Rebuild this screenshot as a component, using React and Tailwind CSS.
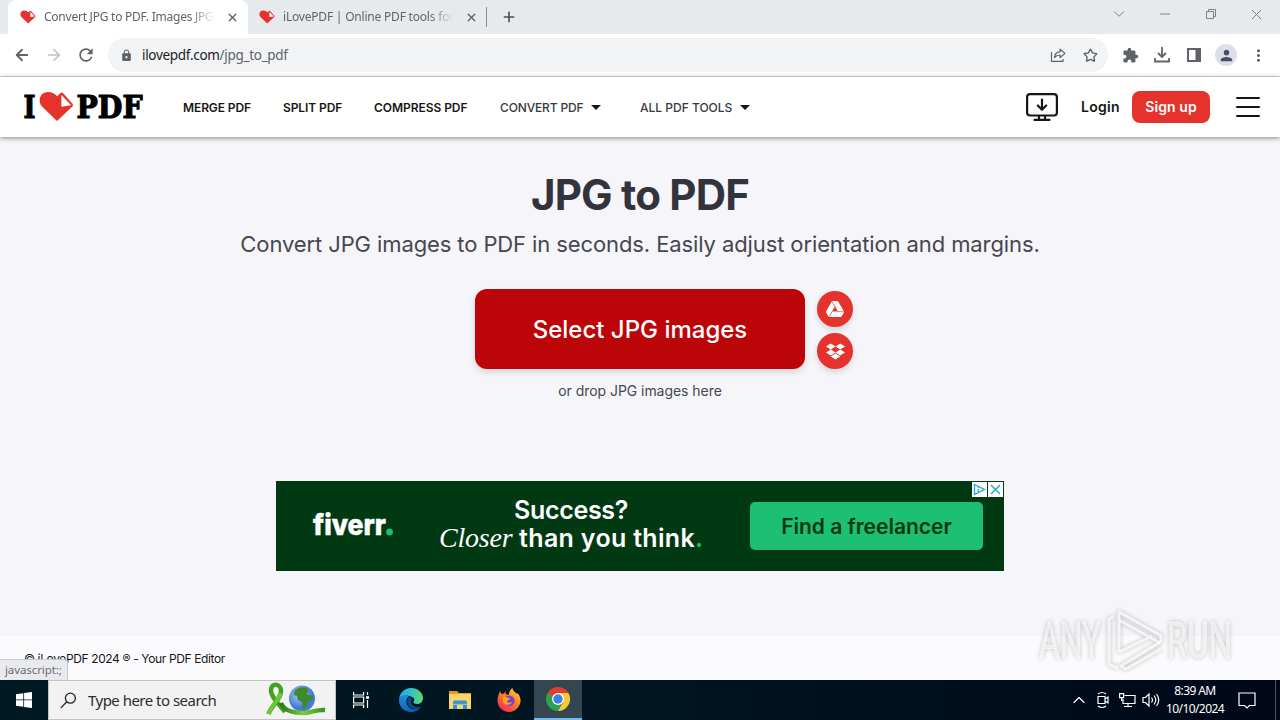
import { ArrowLeft, ArrowRight, X, Plus, ChevronDown, ChevronUp, Minus, Star } from 'lucide-react';
import { MdLock, MdExtension, MdRefresh, MdPerson, MdMoreVert } from 'react-icons/md';
import { FaDropbox } from 'react-icons/fa';

const HEART = 'M57 121 L42 106.5 C37.5 101.5 39.5 92 48 92 C52 92 55 93.6 57.2 96.3 L60.5 93 Q62 91.8 63.2 93.2 L72.6 104 Q73.6 105.3 72.4 106.5 Z';

const HeartIcon = ({ className }) => (
  <svg viewBox="39 91 35 31" className={className}>
    <path d={HEART} fill="#e5322d" />
    <path d="M61.8 95.5 V106.6 L71.6 105.4 Z" fill="#fff" />
  </svg>
);

const Logo = () => (
  <svg viewBox="24 91 120 32" className="w-[120px] h-8 shrink-0 overflow-visible">
    <g fontFamily="DejaVu Serif, serif" fontWeight="700" fontSize="31" fill="#000" stroke="#000" strokeWidth="1.2">
      <text x="23.6" y="118.2" textLength="12" lengthAdjust="spacingAndGlyphs">I</text>
      <text x="76.5" y="118.2" textLength="66" lengthAdjust="spacingAndGlyphs">PDF</text>
    </g>
    <path d={HEART} fill="#e5322d" />
    <path d="M61.4 95 V106.8 L71.2 105.2 Z" fill="#fff" />
  </svg>
);

const DriveIcon = () => (
  <svg viewBox="0 0 18 16" className="w-[18px] h-4">
    <path
      fill="#fff"
      fillRule="evenodd"
      d="M7 0h4q.9 0 1.400.8l5.300 9.200q.5.900 0 1.700l-2 3.500q-.4.800-1.300.800H3.600q-.9 0-1.300-.8l-2-3.500q-.5-.800 0-1.700L5.600.8Q6.100 0 7 0zM9 5.200L6 10.600h6z"
    />
    <path d="M6 .500l3.200 5.400M11.500 10.700h6M6.200 10.300L3.200 15.500" stroke="#e5322d" strokeWidth="0.700" fill="none" />
  </svg>
);

const Tab = ({ title, active }) => (
  <div className={`flex items-center h-[34px] shrink-0 ${active ? 'w-[240px] pl-3 rounded-t-lg bg-white' : 'w-[238px] pl-[11px]'}`}>
    <HeartIcon className="w-4 h-[14px] shrink-0" />
    <span className={`ml-2 overflow-hidden whitespace-nowrap text-xs text-[#5f6368] w-[171px] [mask-image:linear-gradient(to_right,#000_85%,transparent)] ${active ? 'tracking-[-0.24px]' : 'tracking-[-0.2px]'}`}>
      {title}
    </span>
    <X size={13} strokeWidth={2.6} className="ml-[11px] text-[#5f6368]" />
  </div>
);

const TabStrip = () => (
  <div className="flex items-center h-[34px] pl-2 pr-[17px] bg-[#e7eaed]">
    <Tab title="Convert JPG to PDF. Images JPG" active />
    <Tab title="iLovePDF | Online PDF tools for P" />
    <div className="w-px h-5 bg-[#8a8d91]" />
    <Plus size={16} strokeWidth={2.4} className="ml-[14px] text-[#4a4d51]" />
    <div className="flex items-center ml-auto text-[#7d8084] -mt-1.5">
      <ChevronDown size={18} strokeWidth={1.3} />
      <Minus size={16} strokeWidth={1.4} className="ml-[29px]" />
      <svg viewBox="0 0 12 12" className="w-3 h-3 ml-8" fill="none" stroke="currentColor">
        <path d="M1.5 3.5h7v7h-7zM3.5 3.5v-2h7v7h-2" />
      </svg>
      <X size={17} strokeWidth={1.4} className="ml-[31px] -mr-0.5" />
    </div>
  </div>
);

const Toolbar = () => (
  <div className="flex items-center h-[43px] pl-[13px] pr-3 bg-white border-b border-[#dadce0] text-[#5f6368]">
    <ArrowLeft size={18} strokeWidth={2.4} />
    <ArrowRight size={18} strokeWidth={2.2} className="ml-[14px] text-[#bcbec1]" />
    <MdRefresh size={20} className="ml-[13px]" />
    <div className="flex items-center w-[1000px] h-[34px] ml-3 pl-3 pr-[10px] rounded-full bg-[#f1f3f4]">
      <MdLock size={13} />
      <p className="ml-[9px] text-[13.5px] tracking-[-0.300px] text-[#5f6368]">
        <span className="text-[#202124]">ilovepdf.com</span>/jpg_to_pdf
      </p>
      <svg viewBox="0 0 16 16" className="w-4 h-4 ml-auto" fill="none" stroke="currentColor" strokeWidth="1.2">
        <path d="M1.5 5v9.4h11.5V12" />
        <path d="M4.5 10.5c.3-4 2.5-5.7 5.6-5.7V2.2L15 6.4l-4.900 4.100V8C7.600 8 6 8.700 4.500 10.500z" strokeLinejoin="round" />
      </svg>
      <Star size={15} strokeWidth={2.2} className="ml-[17px]" />
    </div>
    <MdExtension size={17} className="ml-[14px]" />
    <svg viewBox="0 0 16 16" className="w-4 h-4 ml-[15px]" fill="none" stroke="currentColor" strokeWidth="1.8">
      <path d="M8 0v9.500M4 6l4 4 4-4M1 11v3.500h14V11" />
    </svg>
    <svg viewBox="0 0 14 14" className="w-[14px] h-[14px] ml-[17px]">
      <path fill="currentColor" fillRule="evenodd" d="M0 0h14v14H0zM2 2v10h6.500V2z" />
    </svg>
    <div className="flex items-center justify-center w-[22px] h-[22px] ml-[14px] rounded-full bg-[#dcdfe8] text-[#474e68]">
      <MdPerson size={17} />
    </div>
    <MdMoreVert size={19} className="ml-3 -mr-1.5" />
  </div>
);

const Caret = () => <span className="border-x-[5px] border-x-transparent border-t-[5px] border-t-[#161616] ml-2" />;

const SiteHeader = () => (
  <header className="relative z-10 flex items-center h-[60px] shrink-0 px-6 bg-white shadow-[0_1px_5px_rgba(0,0,0,0.45)]">
    <Logo />
    <nav className="flex items-center ml-[39px] mt-px text-[12px] font-semibold text-[#161616] whitespace-nowrap font-[Inter,sans-serif]">
      <a className="w-[100px] tracking-[-0.1px]">MERGE PDF</a>
      <a className="w-[91px] tracking-[-0.1px]">SPLIT PDF</a>
      <a className="w-[126px] tracking-[-0.050px]">COMPRESS PDF</a>
      <a className="flex items-center w-[140px] font-medium tracking-[-0.150px] text-[#383840]">CONVERT PDF<Caret /></a>
      <a className="flex items-center font-medium text-[#383840]">ALL PDF TOOLS<Caret /></a>
    </nav>
    <div className="flex items-center ml-auto -mr-1 font-[Inter,sans-serif] text-sm font-semibold text-[#161616]">
      <svg viewBox="0 0 32 28" className="w-8 h-7" fill="none" stroke="#161616" strokeWidth="2.2" strokeLinecap="round" strokeLinejoin="round">
        <rect x="1.100" y="1.100" width="29.800" height="21.400" rx="3" />
        <path d="M16 6.500v10M11.800 12.500l4.200 4.300 4.200-4.300M8.500 26.900h15M13 23v3.500M19 23v3.500" />
      </svg>
      <span className="w-[39px] ml-[23px] tracking-[0.300px] whitespace-nowrap">Login</span>
      <button className="w-[78px] h-8 ml-3 rounded-lg bg-[#e5322d] text-white tracking-[0.100px] whitespace-nowrap">Sign up</button>
      <div className="flex flex-col gap-[7px] w-6 ml-[26px]">
        <span className="h-0.5 rounded bg-[#161616]" />
        <span className="h-0.5 rounded bg-[#161616]" />
        <span className="h-0.5 rounded bg-[#161616]" />
      </div>
    </div>
  </header>
);

const Banner = () => (
  <div className="relative flex w-[728px] h-[90px] mt-20 mx-auto bg-[#003912] text-white">
    <svg viewBox="0 0 82 30" className="w-[82px] h-[30px] ml-9 mt-7 overflow-visible">
      <text x="1" y="25.500" textLength="73" lengthAdjust="spacingAndGlyphs" fontFamily="Inter, sans-serif" fontSize="29" fontWeight="800" fill="#fff" stroke="#fff" strokeWidth="0.5">fiverr</text>
      <circle cx="77.500" cy="23" r="3.400" fill="#1dbf73" />
    </svg>
    <div className="w-[270px] ml-[42px] mt-[15px] text-center whitespace-nowrap text-[25px] leading-[28px] font-semibold font-[Inter,sans-serif]">
      <p className="tracking-[-0.3px]">Success?</p>
      <p>
        <span className="font-['Liberation_Serif',serif] italic font-normal text-[28px] leading-[20px] tracking-[-0.200px]">Closer</span>
        <span className="tracking-[0.320px]"> than you think</span><span className="text-[#1dbf73]">.</span>
      </p>
    </div>
    <button className="w-[233px] h-12 ml-11 mt-[21px] pt-px rounded-[5px] bg-[#1dbf73] text-[#003912] text-[21px] font-semibold font-[Inter,sans-serif] whitespace-nowrap">
      Find a freelancer
    </button>
    <div className="absolute top-px right-px flex gap-px text-[#19a9c9]">
      <svg viewBox="0 0 15 15" className="w-[15px] h-[15px] bg-white" fill="none" stroke="currentColor" strokeWidth="1.3">
        <path d="M2.500 2.500v10l10-5zM6.200 5.200v.8M6.200 7v3" />
      </svg>
      <svg viewBox="0 0 15 15" className="w-[15px] h-[15px] bg-white" fill="none" stroke="currentColor" strokeWidth="1.4">
        <path d="M3 3l9 9M12 3l-9 9" />
      </svg>
    </div>
  </div>
);

const Watermark = () => (
  <svg viewBox="0 0 200 66" className="absolute left-[1036px] top-[607px] w-[200px] h-[66px] drop-shadow-[0_0_2px_rgba(0,0,0,0.35)]">
    <g fontFamily="Roboto, sans-serif" fontSize="50" fill="#fff" fillOpacity="0.6" stroke="#fff" strokeOpacity="0.6" strokeWidth="0.8">
      <text x="3" y="51" textLength="62" lengthAdjust="spacingAndGlyphs">ANY</text>
      <text x="131" y="51" textLength="65" lengthAdjust="spacingAndGlyphs">RUN</text>
    </g>
    <g fill="none" stroke="#fff" strokeOpacity="0.75" strokeWidth="3" strokeLinejoin="round">
      <path d="M83 45V5l42 23.500v6L85 59l5 3 35-20" />
      <path d="M83 13l41 23M83 45l33-16M77 9.500l-4 3v45l9 3.500" />
    </g>
  </svg>
);

const Ribbon = () => (
  <svg viewBox="0 0 62 36" className="w-[62px] h-9">
    <defs>
      <radialGradient id="sea" cx="0.4" cy="0.35">
        <stop offset="0" stopColor="#a9cdfa" />
        <stop offset="1" stopColor="#477ad0" />
      </radialGradient>
      <linearGradient id="rib">
        <stop offset="0" stopColor="#257b16" />
        <stop offset="0.5" stopColor="#78cf35" />
        <stop offset="1" stopColor="#33931a" />
      </linearGradient>
    </defs>
    <circle cx="37" cy="16.500" r="13" fill="url(#sea)" />
    <path d="M29 10c2-4 8-6 13-4l2 3-3 3 3 1 4 1-1 4-4 2-2 6-3 1-1-7-4-2-1-4-3-1z" fill="#3c8b2d" />
    <path d="M3.500 32C6 24 17 16 16 8c-1-7-10-7-10 0-.5 7 9 15 14 22" fill="none" stroke="#43a022" strokeWidth="4.500" />
    <path d="M16 21c3 8 12 10 23 10 8 0 12-4 21-3" fill="none" stroke="url(#rib)" strokeWidth="4.500" />
    <path d="M3.500 32C6 24 14 18 15.500 11" fill="none" stroke="#6fc635" strokeWidth="4" />
  </svg>
);

const EdgeIcon = () => (
  <svg viewBox="0 0 24 24" className="w-6 h-6">
    <defs>
      <linearGradient id="e1" x1="0" y1="0.300" x2="1" y2="0.300">
        <stop offset="0" stopColor="#2aa5dd" />
        <stop offset="0.500" stopColor="#30bfd0" />
        <stop offset="1" stopColor="#62dc62" />
      </linearGradient>
      <linearGradient id="e2" x1="0" y1="0" x2="0.300" y2="1">
        <stop offset="0" stopColor="#2190dd" />
        <stop offset="1" stopColor="#1260ba" />
      </linearGradient>
    </defs>
    <path d="M0 11C1 4 6 0 12 0c7 0 12 5 12 10 0 4-3 6-6 6-2 0-4-.8-3.500-2 1-1.500 1-3 0-4C11 7 3 6 0 11z" fill="url(#e1)" />
    <path d="M0 12c1-5 7-6 10-4-3 2-4 9 1 12 4 2.500 8 1.500 11-1-2 3-6 5-10 5C5 24 0 19 0 12z" fill="url(#e2)" />
    <path d="M10 9c-3 3-2 9 2 11 3.500 2 8 1 10.500-1.500-6 2-12-2-10-6 .5-1.500-.5-3-2.500-3.500z" fill="#0c4a86" />
  </svg>
);

const FolderIcon = () => (
  <svg viewBox="0 0 22 20" className="w-[22px] h-5">
    <path d="M0 1h8l2 2h12v4H0z" fill="#e59a22" />
    <path d="M0 4h22v15H0z" fill="#fbd566" />
    <path d="M4 19v-7q0-1.500 1.500-1.500h11q1.500 0 1.500 1.500v7h-4v-4H8v4z" fill="#3c91d2" />
    <path d="M4 15h14v-1.200H4z" fill="#7dc0ee" />
  </svg>
);

const FirefoxIcon = () => (
  <svg viewBox="0 0 24 24" className="w-6 h-6">
    <defs>
      <linearGradient id="ff" x1="0.900" y1="0" x2="0.200" y2="1">
        <stop offset="0" stopColor="#ffe42f" />
        <stop offset="0.400" stopColor="#ff8a1e" />
        <stop offset="1" stopColor="#f6235a" />
      </linearGradient>
    </defs>
    <path d="M3 3l1.500 3L7 5.500 8.500 3v3l3 1c1-4 2-6 4-7 0 3 3 4 4.500 6l.5-1C24 9 24.500 14 22 18c-2.200 3.700-6 6-10 6C5.500 24 .500 19 .500 12.500.500 9 1.500 7 3 3z" fill="url(#ff)" />
    <circle cx="12.300" cy="12.800" r="5.300" fill="#7642d5" />
    <path d="M6 9c3-1 4 1 7 1.200-.5 1.800-2.500 1.600-3 3 .5 2 3 2 5 .8-1 3.500-7 4-9 0-.6-1.500-.5-3 0-5z" fill="#ffa11f" />
  </svg>
);

const ChromeIcon = () => (
  <svg viewBox="0 0 24 24" className="w-6 h-6">
    <path d="M12 12L1.600 6A12 12 0 0 0 12 24l5.200-9z" fill="#2ba24c" />
    <path d="M12 12l5.200 3L12 24A12 12 0 0 0 22.400 6H12z" fill="#fcc934" />
    <path d="M1.600 6L6.800 15 12 12V6h10.400A12 12 0 0 0 1.600 6z" fill="#e33b2e" />
    <path d="M1.600 6l5.200 9L12 12z" fill="#2ba24c" />
    <circle cx="12" cy="12" r="6" fill="#fff" />
    <circle cx="12" cy="12" r="4.700" fill="#3e7fe8" />
  </svg>
);

const Taskbar = () => (
  <div className="flex h-10 shrink-0 text-white bg-gradient-to-r from-[#001821] via-[#001521] to-[#000818]">
    <div className="flex items-center justify-center w-12">
      <svg viewBox="0 0 16 16" className="w-4 h-4" fill="#fff">
        <path d="M0 2.200l7.300-1v6.300H0zM8.100 1.100L16 0v7.500H8.100zM0 8.300h7.300v6.400L0 13.700zM8.100 8.300H16V16l-7.900-1.100z" />
      </svg>
    </div>
    <div className="flex items-center w-[288px] border border-[#c3c3c3] bg-[#f2f2f2] text-[#2c2c2c]">
      <svg viewBox="0 0 18 18" className="w-[17px] h-[17px] ml-[11px]" fill="none" stroke="#222" strokeWidth="1.400">
        <circle cx="11" cy="6.500" r="5.300" />
        <path d="M7.200 10.300L1 16.800" />
      </svg>
      <span className="ml-[11px] text-[15px] tracking-[-0.520px] whitespace-nowrap">Type here to search</span>
      <div className="ml-auto mr-2"><Ribbon /></div>
    </div>
    <div className="flex items-center justify-center w-[49px]">
      <svg viewBox="0 0 16 16" className="w-4 h-4" fill="none" stroke="#fff" strokeWidth="1.200">
        <path d="M.600 0v3h10V0M.600 16v-3h10v3M.600 5h10v6H.600zM14.500 0v3M14.500 8v8" />
        <path d="M13 4.200h3v2.600h-3z" fill="#fff" stroke="none" />
      </svg>
    </div>
    <div className="flex items-center justify-center w-[52px]"><EdgeIcon /></div>
    <div className="flex items-center justify-center w-[46px]"><FolderIcon /></div>
    <div className="flex items-center justify-center w-[51px]"><FirefoxIcon /></div>
    <div className="flex items-center justify-center w-12 bg-[#344750] border-b-2 border-[#76b9ed]"><ChromeIcon /></div>
    <div className="flex items-center ml-auto">
      <ChevronUp size={20} strokeWidth={1.400} />
      <svg viewBox="0 0 16 18" className="w-4 h-[18px] ml-1.5" fill="none" stroke="#fff" strokeWidth="1.200">
        <path d="M3 3q4-3 8 0M3 15q4 3 8 0M3 5.500h7v7H3zM10 8l3-2v6l-3-2" />
      </svg>
      <svg viewBox="0 0 17 16" className="w-[17px] h-4 ml-2" fill="none" stroke="#fff" strokeWidth="1.200">
        <path d="M5.500 3.500H16v8H4V7M5 14.500h8M9 11.500v3M.600 1.600h4v4h-4zM2.600 5.600V9" />
      </svg>
      <svg viewBox="0 0 18 16" className="w-[18px] h-4 ml-1.5" fill="none" stroke="#fff" strokeWidth="1.200">
        <path d="M1 5.500h2.500L7 2v12l-3.500-3.500H1zM9.500 5.500q2 2.500 0 5M12 3.500q3.500 4.500 0 9M14.500 2q4.500 6 0 12" />
      </svg>
      <div className="w-[70px] text-center text-xs leading-[18px] tracking-[-0.600px] whitespace-nowrap">
        <p>8:39 AM</p>
        <p>10/10/2024</p>
      </div>
      <svg viewBox="0 0 18 17" className="w-[18px] h-[17px] ml-2" fill="none" stroke="#fff" strokeWidth="1.200">
        <path d="M1 1h16v12.500h-5.500L9 16l-2.500-2.500H1z" />
      </svg>
      <div className="w-px h-10 ml-[19px] mr-1 bg-[#4a5260]" />
    </div>
  </div>
);

export default function App() {
  return (
    <div className="relative flex flex-col w-[1280px] h-[720px] overflow-hidden bg-[#f5f5fa] font-['Noto_Sans',sans-serif]">
      <TabStrip />
      <Toolbar />
      <SiteHeader />
      <main className="h-[499px] shrink-0 font-[Inter,sans-serif] text-center whitespace-nowrap">
        <h1 className="pt-8 text-[42px] leading-[52px] font-bold tracking-[-0.800px] text-[#33333b]">JPG to PDF</h1>
        <h2 className="mt-[7px] text-[22px] leading-8 tracking-[-0.105px] text-[#47474f]">
          Convert JPG images to PDF in seconds. Easily adjust orientation and margins.
        </h2>
        <div className="flex justify-center gap-3 mt-[29px] pl-12">
          <button className="w-[330px] h-20 pt-0.5 rounded-xl bg-[#bc0508] text-white text-2xl font-medium shadow-[0_3px_6px_rgba(0,0,0,0.14)]">
            Select JPG images
          </button>
          <div className="flex flex-col gap-1.5 pt-0.5">
            <span className="flex items-center justify-center w-9 h-9 rounded-full bg-[#e5322d] text-white shadow-[0_3px_6px_rgba(0,0,0,0.14)]"><DriveIcon /></span>
            <span className="flex items-center justify-center w-9 h-9 rounded-full bg-[#e5322d] text-white shadow-[0_3px_6px_rgba(0,0,0,0.14)]"><FaDropbox size={19} /></span>
          </div>
        </div>
        <p className="mt-[11px] text-sm leading-[21px] tracking-[-0.050px] text-[#47474f]">or drop JPG images here</p>
        <Banner />
      </main>
      <footer className="relative h-11 shrink-0 bg-[#fbfbfe] pl-6 pt-[13px] font-[Inter,sans-serif] text-xs leading-5 tracking-[-0.370px] text-[#161616]">
        © iLovePDF 2024 ® - Your PDF Editor
        <div className="absolute left-0 bottom-0 w-[68px] h-[21px] pl-[5px] pt-px border-t border-r border-[#c8c9cc] rounded-tr bg-[#e9eaee] font-['Noto_Sans',sans-serif] text-[11.500px] leading-[18px] tracking-[-0.100px] text-[#6a6d72] whitespace-nowrap">
          javascript:;
        </div>
      </footer>
      <Taskbar />
      <Watermark />
    </div>
  );
}
